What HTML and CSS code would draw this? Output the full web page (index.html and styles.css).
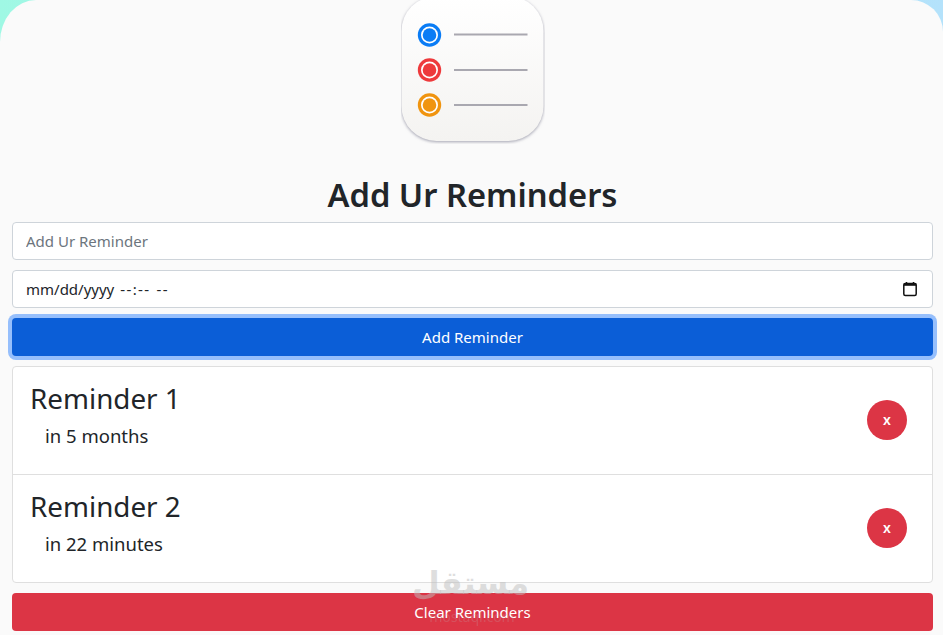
FILE: index.html
```html
<!DOCTYPE html>
<html lang="en">
<head>
  <meta charset="UTF-8">
  <meta name="viewport" content="width=device-width, initial-scale=1.0">
  <title>Reminders</title>
  <link rel="stylesheet" href="styles.css">
</head>
<body>
  <div class="app">
    <!-- Logo -->
    <svg class="logo" width="144" height="144" viewBox="0 0 144 144" aria-hidden="true">
      <defs>
        <linearGradient id="tile" x1="0" y1="0" x2="0" y2="1">
          <stop offset="0" stop-color="#ffffff"/>
          <stop offset="1" stop-color="#f4f3f1"/>
        </linearGradient>
      </defs>
      <rect class="logo-tile" x="0.500" y="-4" width="142" height="145" rx="35" fill="url(#tile)"/>
      <circle cx="28.500" cy="35" r="11.700" fill="#0a7cf5"/>
      <circle cx="28.500" cy="35" r="8.500" fill="#fff"/>
      <circle cx="28.500" cy="35" r="6.800" fill="#0a7cf5"/>
      <circle cx="28.500" cy="70" r="11.700" fill="#ee3a3c"/>
      <circle cx="28.500" cy="70" r="8.500" fill="#fff"/>
      <circle cx="28.500" cy="70" r="6.800" fill="#ee3a3c"/>
      <circle cx="28.500" cy="105" r="11.700" fill="#f0940f"/>
      <circle cx="28.500" cy="105" r="8.500" fill="#fff"/>
      <circle cx="28.500" cy="105" r="6.800" fill="#f0940f"/>
      <path d="M53 34.500H126.500M53 70H126.500M53 105H126.500" stroke="#a9a8b0" stroke-width="2"/>
    </svg>

    <h1>Add Ur Reminders</h1>

    <form class="reminder-form">
      <input class="field" type="text" placeholder="Add Ur Reminder">
      <div class="field date-field">
        <span>mm/dd/yyyy <span class="date-time">--:--</span> <span class="date-time">--</span></span>
        <svg width="16" height="16" viewBox="0 0 16 16" aria-hidden="true">
          <rect x="1.800" y="2.500" width="12.400" height="12" rx="1.500" fill="#fff" stroke="#111" stroke-width="1.500"/>
          <path d="M1.800 2.500H14.200V4.800H1.800Z" fill="#111"/>
          <path d="M4.500 1V3M11.500 1V3" stroke="#111" stroke-width="1.500"/>
        </svg>
      </div>
      <button type="button" class="btn btn-add">Add Reminder</button>
    </form>

    <!-- List -->
    <ul class="reminders">
      <li class="reminder">
        <div class="reminder-text">
          <div class="reminder-title">Reminder 1</div>
          <div class="reminder-time">in 5 months</div>
        </div>
        <button type="button" class="btn-remove">x</button>
      </li>
      <li class="reminder">
        <div class="reminder-text">
          <div class="reminder-title">Reminder 2</div>
          <div class="reminder-time">in 22 minutes</div>
        </div>
        <button type="button" class="btn-remove">x</button>
      </li>
    </ul>

    <button type="button" class="btn btn-clear">Clear Reminders</button>

    <!-- Watermark -->
    <div class="watermark">
      <div class="watermark-ar" lang="ar" dir="rtl">مستقل</div>
      <div class="watermark-en">mostaql.com</div>
    </div>
  </div>
</body>
</html>
```

FILE: styles.css
```css
* {
  box-sizing: border-box;
}

body {
  margin: 0;
  font-family: "Noto Sans", "Open Sans", sans-serif;
  font-size: 15px;
  line-height: 1.5;
  color: #212529;
  background: linear-gradient(90deg, #9ff8e4, #b4e2fb);
}

.app {
  position: relative;
  min-height: 635px;
  padding: 0 10px 0 12px;
  background-color: #fafafa;
  border-top-left-radius: 36px 42px;
  border-top-right-radius: 32px 32px;
  overflow: hidden;
}

.logo {
  display: block;
  margin: 0 auto;
  width: 144px;
  height: 144px;
}

.logo-tile {
  filter: drop-shadow(0 1px 1.500px rgba(90, 90, 115, 0.55));
}

h1 {
  margin: 30px 0 6px;
  font-size: 32.700px;
  font-weight: 600;
  line-height: 42px;
  text-align: center;
}

.reminder-form {
  display: flex;
  flex-direction: column;
  gap: 10px;
}

.field {
  display: block;
  width: 100%;
  height: 38px;
  padding: 6px 12px 6px 13px;
  font-family: inherit;
  font-size: 15px;
  color: #212529;
  background-color: #fff;
  border: 1px solid #ced4da;
  border-radius: 4px;
}

.field::placeholder {
  color: #6c757d;
}

.date-field {
  display: flex;
  align-items: center;
  justify-content: space-between;
  padding-right: 14px;
}

.date-time {
  margin-left: 2px;
  letter-spacing: 1.400px;
}

.btn {
  display: block;
  width: 100%;
  height: 38px;
  font-family: inherit;
  font-size: 15px;
  color: #fff;
  border: 1px solid transparent;
  border-radius: 4px;
}

.btn-add {
  background-color: #0b5ed7;
  box-shadow: 0 0 0 4px rgba(49, 132, 253, 0.5);
}

.reminders {
  margin: 10px 0;
  padding: 0;
  list-style: none;
  background-color: #fff;
  border: 1px solid #dfdfdf;
  border-radius: 4px;
}

.reminder {
  display: flex;
  align-items: center;
  justify-content: space-between;
  height: 107px;
  padding: 0 25px 2px 17px;
}

.reminder + .reminder {
  height: 108px;
  border-top: 1px solid #dfdfdf;
}

.reminder-text {
  align-self: flex-start;
  padding-top: 10px;
}

.reminder-title {
  font-size: 27.800px;
  line-height: 42px;
}

.reminder-time {
  margin-top: 2px;
  padding-left: 15px;
  font-size: 18.500px;
  line-height: 30px;
}

.btn-remove {
  width: 40px;
  height: 40px;
  padding: 0;
  font-family: inherit;
  font-size: 14px;
  font-weight: 600;
  color: #fff;
  background-color: #dc3545;
  border: none;
  border-radius: 50%;
}

.btn-clear {
  background-color: #dc3545;
}

.watermark {
  position: absolute;
  left: 415px;
  top: 558px;
  width: 114px;
  color: rgba(190, 190, 190, 0.5);
  text-align: center;
  pointer-events: none;
}

.watermark-ar {
  font-family: "DejaVu Sans", sans-serif;
  font-size: 32px;
  font-weight: bold;
  line-height: 50px;
}

.watermark-en {
  font-size: 14px;
  line-height: 18px;
  opacity: 0.4;
}
```
